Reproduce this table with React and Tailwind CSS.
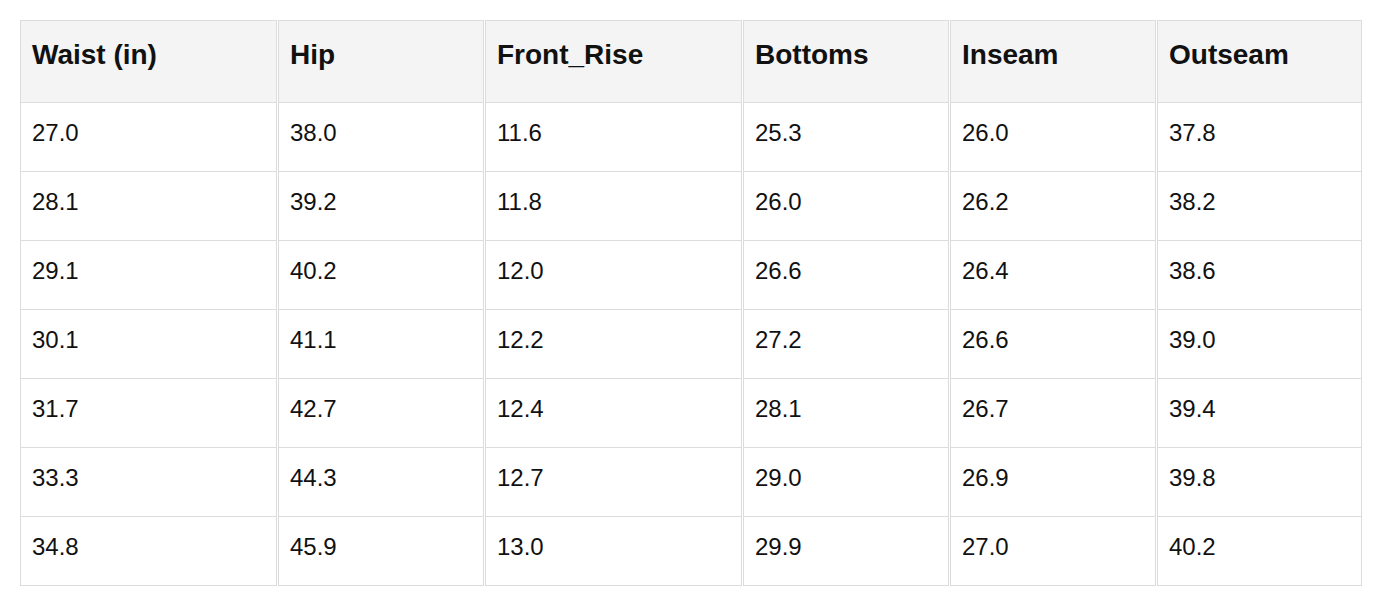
const columns = [
  { label: "Waist (in)", width: "w-[257px]" },
  { label: "Hip", width: "w-[206px]" },
  { label: "Front_Rise", width: "w-[257px]" },
  { label: "Bottoms", width: "w-[206px]" },
  { label: "Inseam", width: "w-[206px]" },
  { label: "Outseam", width: "w-[205px]" },
];

const rows = [
  ["27.0", "38.0", "11.6", "25.3", "26.0", "37.8"],
  ["28.1", "39.2", "11.8", "26.0", "26.2", "38.2"],
  ["29.1", "40.2", "12.0", "26.6", "26.4", "38.6"],
  ["30.1", "41.1", "12.2", "27.2", "26.6", "39.0"],
  ["31.7", "42.7", "12.4", "28.1", "26.7", "39.4"],
  ["33.3", "44.3", "12.7", "29.0", "26.9", "39.8"],
  ["34.8", "45.9", "13.0", "29.9", "27.0", "40.2"],
];

const App = () => {
  return (
    <div
      className="min-h-[605px] bg-white pt-5 px-[19px]"
      style={{ fontFamily: '"Liberation Sans", Arial, sans-serif' }}
    >
      <table className="table-fixed w-[1344px] border-separate border-spacing-x-px border-spacing-y-0">
        <thead>
          <tr>
            {columns.map((col) => (
              <th
                key={col.label}
                className={`${col.width} h-[83px] align-top text-left font-bold text-[28px] leading-[32px] text-[#111] bg-[#f4f4f4] border border-[#dcdcdc] pl-[11px] pt-[18px]`}
              >
                {col.label}
              </th>
            ))}
          </tr>
        </thead>

        <tbody>
          {rows.map((row, i) => (
            <tr key={i}>
              {row.map((value, j) => (
                <td
                  key={j}
                  className="h-[69px] align-top text-[24px] leading-[28px] text-[#111] border-x border-b border-[#dcdcdc] pl-[11px] pt-4"
                >
                  {value}
                </td>
              ))}
            </tr>
          ))}
        </tbody>
      </table>
    </div>
  );
};

export default App;
